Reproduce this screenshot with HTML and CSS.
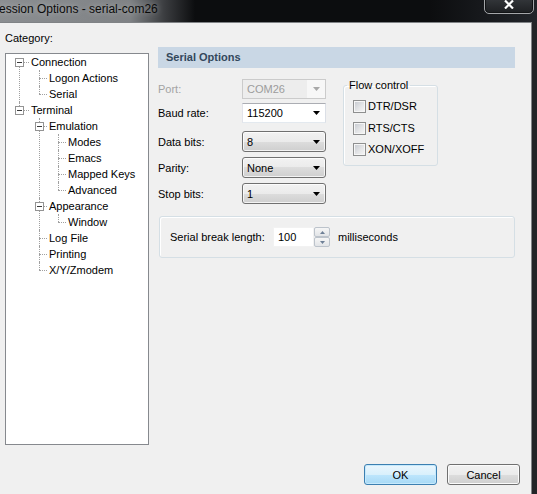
FILE: index.html
```html
<!DOCTYPE html>
<html>
<head>
<meta charset="utf-8">
<title>Session Options - serial-com26</title>
<link rel="stylesheet" href="styles.css">
</head>
<body>
<div class="window">
  <div class="titlebar">
    <span class="title">ession Options - serial-com26</span>
    <div class="close">
      <svg width="10" height="9" viewBox="0 0 10 9"><path d="M1 0.5 L9 8.5 M9 0.5 L1 8.5" stroke="#fff" stroke-width="2.2" fill="none"/></svg>
    </div>
  </div>
  <div class="client">
    <div class="main">
      <div class="left">
        <div class="cat-label">Category:</div>
        <div class="tree-box">
          <ul class="tree">
            <li><div class="row"><span class="box"></span>Connection</div>
              <ul>
                <li><div class="row">Logon Actions</div></li>
                <li><div class="row">Serial</div></li>
              </ul>
            </li>
            <li><div class="row"><span class="box"></span>Terminal</div>
              <ul>
                <li><div class="row"><span class="box"></span>Emulation</div>
                  <ul>
                    <li><div class="row">Modes</div></li>
                    <li><div class="row">Emacs</div></li>
                    <li><div class="row">Mapped Keys</div></li>
                    <li><div class="row">Advanced</div></li>
                  </ul>
                </li>
                <li><div class="row"><span class="box"></span>Appearance</div>
                  <ul>
                    <li><div class="row">Window</div></li>
                  </ul>
                </li>
                <li><div class="row">Log File</div></li>
                <li><div class="row">Printing</div></li>
                <li><div class="row">X/Y/Zmodem</div></li>
              </ul>
            </li>
          </ul>
        </div>
      </div>
      <div class="right">
        <div class="section-head">Serial Options</div>
        <div class="form">
          <div class="fields">
            <div class="field f-port">
              <span class="lbl lbl-disabled">Port:</span>
              <div class="combo combo-disabled">
                <span class="val">COM26</span>
                <svg class="arrow" width="7" height="4" viewBox="0 0 7 4"><path d="M0 0 H7 L3.5 4 Z" fill="#a8a8a8"/></svg>
              </div>
            </div>
            <div class="field f-baud">
              <span class="lbl">Baud rate:</span>
              <div class="combo combo-edit">
                <span class="val">115200</span>
                <svg class="arrow" width="7" height="4" viewBox="0 0 7 4"><path d="M0 0 H7 L3.5 4 Z" fill="#000"/></svg>
              </div>
            </div>
            <div class="field f-data">
              <span class="lbl">Data bits:</span>
              <div class="combo combo-list">
                <span class="val">8</span>
                <svg class="arrow" width="7" height="4" viewBox="0 0 7 4"><path d="M0 0 H7 L3.5 4 Z" fill="#000"/></svg>
              </div>
            </div>
            <div class="field f-parity">
              <span class="lbl">Parity:</span>
              <div class="combo combo-list">
                <span class="val">None</span>
                <svg class="arrow" width="7" height="4" viewBox="0 0 7 4"><path d="M0 0 H7 L3.5 4 Z" fill="#000"/></svg>
              </div>
            </div>
            <div class="field f-stop">
              <span class="lbl">Stop bits:</span>
              <div class="combo combo-list">
                <span class="val">1</span>
                <svg class="arrow" width="7" height="4" viewBox="0 0 7 4"><path d="M0 0 H7 L3.5 4 Z" fill="#000"/></svg>
              </div>
            </div>
          </div>
          <fieldset class="flow">
            <legend>Flow control</legend>
            <div class="chk chk-1"><span class="cb"></span>DTR/DSR</div>
            <div class="chk chk-2"><span class="cb"></span>RTS/CTS</div>
            <div class="chk chk-3"><span class="cb"></span>XON/XOFF</div>
          </fieldset>
        </div>
        <div class="break-group">
          <span class="break-label">Serial break length:</span>
          <span class="edit">100</span>
          <div class="spin">
            <span class="spin-btn"><svg width="5" height="3" viewBox="0 0 5 3"><path d="M0 3 H5 L2.5 0 Z" fill="#6d7f96"/></svg></span>
            <span class="spin-btn"><svg width="5" height="3" viewBox="0 0 5 3"><path d="M0 0 H5 L2.5 3 Z" fill="#6d7f96"/></svg></span>
          </div>
          <span class="unit">milliseconds</span>
        </div>
      </div>
    </div>
    <div class="footer">
      <button class="btn btn-default">OK</button>
      <button class="btn">Cancel</button>
    </div>
  </div>
</div>
</body>
</html>
```
FILE: styles.css
```css
* { box-sizing: border-box; }
html, body { margin: 0; padding: 0; }
body {
  width: 537px;
  height: 494px;
  overflow: hidden;
  background: #222427;
  font-family: "Liberation Sans", Arial, sans-serif;
  font-size: 11px;
  color: #000;
}
.window {
  display: flex;
  flex-direction: column;
  height: 494px;
}
.titlebar {
  height: 22px;
  flex: none;
  display: flex;
  align-items: flex-start;
  overflow: hidden;
  background: linear-gradient(to right, #8b8e91 0, #7f8285 130px, #3a3c3f 165px, #0c0d0f 195px, #0c0d0f 430px, #22252a 537px);
}
.title {
  font-size: 12px;
  line-height: 18px;
  margin-left: -1px;
  color: #0a0a0a;
  text-shadow: 0 0 6px rgba(255, 255, 255, 0.45);
}
.close {
  margin-left: auto;
  margin-right: 3px;
  margin-top: -8px;
  width: 50px;
  height: 22px;
  border: 1px solid #a4a6a9;
  border-radius: 0 0 5px 5px;
  background: linear-gradient(#3d4044, #1d1f22);
  box-shadow: inset 0 0 0 1px #111315;
  display: flex;
  justify-content: center;
  padding-top: 7px;
}
.client {
  flex: 1;
  width: 532px;
  background: #f0f0f0;
  border-top: 1px solid #808386;
  border-right: 1px solid #808386;
  padding: 9px 11px 0 0;
  display: flex;
  flex-direction: column;
}
.main { display: flex; align-items: flex-start; }
.left { margin-left: 5px; width: 144px; }
.cat-label { height: 13px; line-height: 13px; margin-bottom: 8px; }
.tree-box {
  height: 392px;
  border: 1px solid #86898e;
  background: #fff;
}

/* tree */
.tree, .tree ul { list-style: none; margin: 0; padding: 0; }
.tree li { position: relative; --line: 13px; --text: 25px; }
.tree ul li { --line: 33px; --text: 43px; }
.tree ul ul li { --line: 52px; --text: 62px; }
.tree li::before {
  content: "";
  position: absolute;
  left: var(--line);
  top: 0;
  bottom: 0;
  border-left: 1px dotted #a0a0a0;
}
.tree li:last-child::before { bottom: auto; height: 8px; }
.tree > li:first-child::before { top: 8px; }
.row {
  position: relative;
  height: 16px;
  line-height: 16px;
  padding-left: var(--text);
  white-space: nowrap;
}
.row::before {
  content: "";
  position: absolute;
  left: var(--line);
  top: 8px;
  width: calc(var(--text) - var(--line) - 2px);
  border-top: 1px dotted #a0a0a0;
}
.box {
  position: absolute;
  left: calc(var(--line) - 4px);
  top: 4px;
  width: 9px;
  height: 9px;
  border: 1px solid #949494;
  background: #fff;
  z-index: 1;
}
.box::after {
  content: "";
  position: absolute;
  left: 1px;
  top: 3px;
  width: 5px;
  height: 1px;
  background: #3a3a3a;
}

/* right panel */
.right { margin-left: 9px; width: 357px; margin-top: 15px; }
.section-head {
  height: 21px;
  line-height: 21px;
  padding-left: 8px;
  background: #c9d7e5;
  font-weight: bold;
  color: #33475c;
}
.form { display: flex; align-items: flex-start; margin-top: 11px; }
.fields { width: 168px; }
.field { display: flex; align-items: center; }
.lbl { width: 84px; }
.lbl-disabled { color: #a3a3a3; }
.f-baud { margin-top: 4px; }
.f-data { margin-top: 8px; }
.f-parity, .f-stop { margin-top: 5px; }
.combo {
  width: 84px;
  height: 21px;
  display: flex;
  align-items: center;
  justify-content: space-between;
  padding: 0 5px 0 4px;
}
.f-port .combo, .f-baud .combo { height: 20px; }
.combo-disabled {
  border: 1px solid #cbcbcb;
  background: linear-gradient(to right, #ededed 0, #ededed 64px, #f7f7f7 64px);
  color: #9c9c9c;
}
.combo-edit {
  border: 1px solid;
  border-color: #abadb3 #dbdfe6 #e3e9ef #e2e3ea;
  background: #fff;
}
.combo-list {
  border: 1px solid #707070;
  border-radius: 3px;
  background: linear-gradient(#f2f2f2 0%, #ebebeb 50%, #dddddd 50%, #cfcfcf 100%);
  box-shadow: inset 0 0 0 1px rgba(255, 255, 255, 0.75);
}
.arrow { display: block; flex: none; }

.flow {
  margin: 0 0 0 17px;
  padding: 0 0 9px 0;
  width: 95px;
  min-width: 0;
  border: 1px solid #d5dfe5;
  border-radius: 3px;
  box-shadow: inset 1px 1px 0 #fff;
}
.flow legend {
  margin-left: 3px;
  padding: 0 2px;
  line-height: 13px;
}
.chk {
  display: flex;
  align-items: center;
  height: 13px;
  padding-left: 9px;
  line-height: 13px;
}
.chk-1 { margin-top: 8px; }
.chk-2 { margin-top: 9px; }
.chk-3 { margin-top: 8px; }
.cb {
  width: 13px;
  height: 13px;
  margin-right: 2px;
  border: 1px solid #8e8f8f;
  background: linear-gradient(135deg, #c4c8ce 0%, #e4e5e7 55%, #f7f7f7 100%);
  box-shadow: inset 0 0 0 1px #f6f6f6;
  flex: none;
}

.break-group {
  margin-top: 12px;
  margin-left: 1px;
  width: 356px;
  height: 42px;
  border: 1px solid #d5dfe5;
  border-radius: 3px;
  box-shadow: inset 1px 1px 0 #fff;
  display: flex;
  align-items: center;
  padding-left: 10px;
}
.break-label { width: 103px; }
.edit {
  width: 41px;
  height: 20px;
  line-height: 18px;
  padding-left: 4px;
  background: #fff;
  border: 1px solid #f2f2f2;
}
.spin {
  width: 16px;
  height: 20px;
  display: flex;
  flex-direction: column;
}
.spin-btn {
  height: 10px;
  border: 1px solid #bcc3cb;
  border-radius: 2px;
  background: linear-gradient(#f6f6f6, #e2e4e7);
  display: flex;
  align-items: center;
  justify-content: center;
}
.spin-btn svg { display: block; }
.unit { margin-left: 8px; }

.footer {
  display: flex;
  justify-content: flex-end;
  gap: 10px;
  margin-top: 19px;
}
.btn {
  width: 73px;
  height: 21px;
  padding: 0;
  font: inherit;
  color: #000;
  border: 1px solid #707070;
  border-radius: 3px;
  background: linear-gradient(#f2f2f2 0%, #ebebeb 50%, #dddddd 50%, #cfcfcf 100%);
  box-shadow: inset 0 0 0 1px #fbfbfb;
}
.btn-default {
  border-color: #3c7fb1;
  background: linear-gradient(#eaf6fd 0%, #d9f0fc 50%, #bee6fd 50%, #a7d9f5 100%);
  box-shadow: inset 0 0 0 1px #c6e9fc;
}
```
